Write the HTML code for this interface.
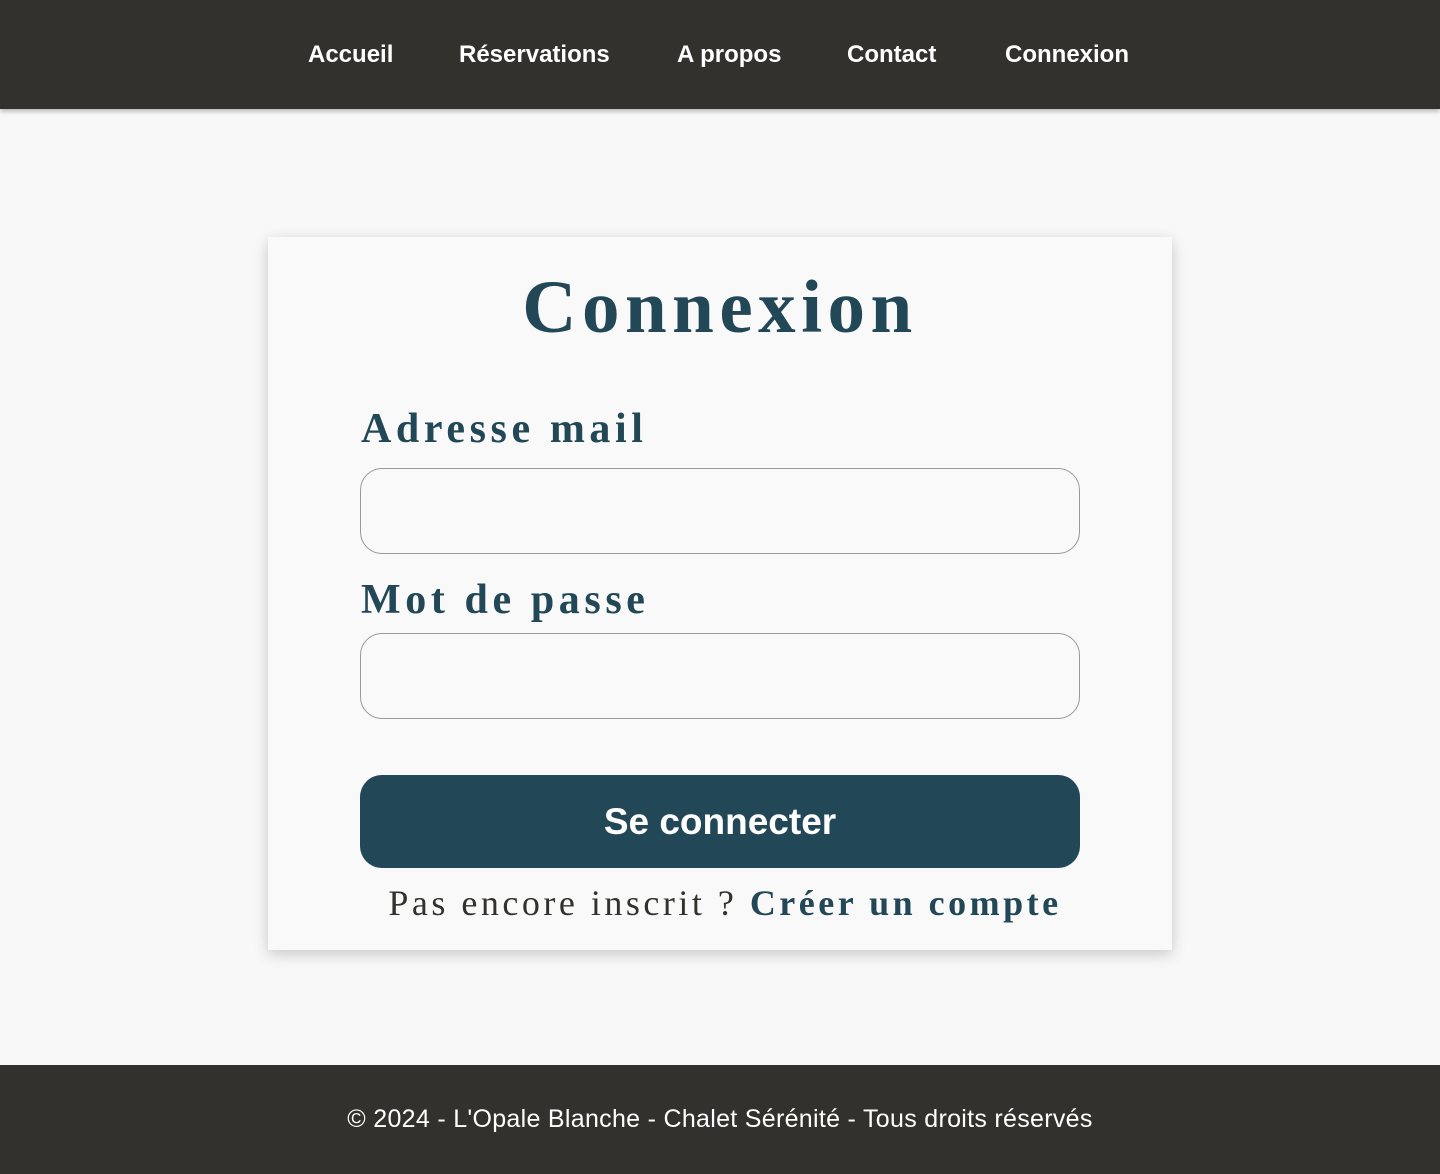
<!DOCTYPE html>
<html><head><meta charset="utf-8"><style>
*{margin:0;padding:0;box-sizing:border-box}
body{width:1440px;height:1174px;background:#f8f8f8;font-family:"Liberation Sans",sans-serif;position:relative;overflow:hidden}
nav{position:absolute;left:0;top:0;width:1440px;height:109px;background:#32312e;box-shadow:0 2px 5px rgba(0,0,0,.3)}
nav a{position:absolute;top:40px;color:#fff;font-weight:bold;font-size:24px;text-decoration:none;line-height:30px}
.card{position:absolute;left:268px;top:237px;width:904px;height:713px;background:#f9f9f9;box-shadow:0 4px 14px rgba(0,0,0,.2)}
h1{position:absolute;left:0;width:1440px;top:268px;text-align:center;font-family:"Liberation Serif",serif;font-weight:bold;font-size:75px;letter-spacing:5.5px;color:#224756;line-height:80px}
.lbl{position:absolute;left:361px;font-family:"Liberation Serif",serif;font-weight:bold;font-size:42px;letter-spacing:4.6px;color:#224756;line-height:46px}
.inp{position:absolute;left:360px;width:720px;height:86px;border:1px solid #999;border-radius:22px;background:#f9f9f9}
.btn{position:absolute;left:360px;top:775px;width:720px;height:93px;background:#224756;border-radius:22px;color:#fff;font-weight:bold;font-size:37px;text-align:center;line-height:93px}
.sub{position:absolute;left:0;width:1440px;top:880px;text-align:center;font-family:"Liberation Serif",serif;font-size:36px;letter-spacing:3.5px;color:#32312e;line-height:46px;padding-left:10px}
.sub b{color:#224756}
footer{position:absolute;left:0;top:1065px;width:1440px;height:109px;background:#32312e;color:#fff;font-size:25px;letter-spacing:0.3px;text-align:center;line-height:109px}
</style></head><body>
<nav>
<a style="left:308px">Accueil</a>
<a style="left:459px">Réservations</a>
<a style="left:677px">A propos</a>
<a style="left:847px">Contact</a>
<a style="left:1005px">Connexion</a>
</nav>
<div class="card"></div>
<h1>Connexion</h1>
<div class="lbl" style="top:406px">Adresse mail</div>
<div class="inp" style="top:468px"></div>
<div class="lbl" style="top:577px">Mot de passe</div>
<div class="inp" style="top:633px"></div>
<div class="btn">Se connecter</div>
<div class="sub">Pas encore inscrit ? <b>Créer un compte</b></div>
<footer>© 2024 - L'Opale Blanche - Chalet Sérénité - Tous droits réservés</footer>
</body></html>
